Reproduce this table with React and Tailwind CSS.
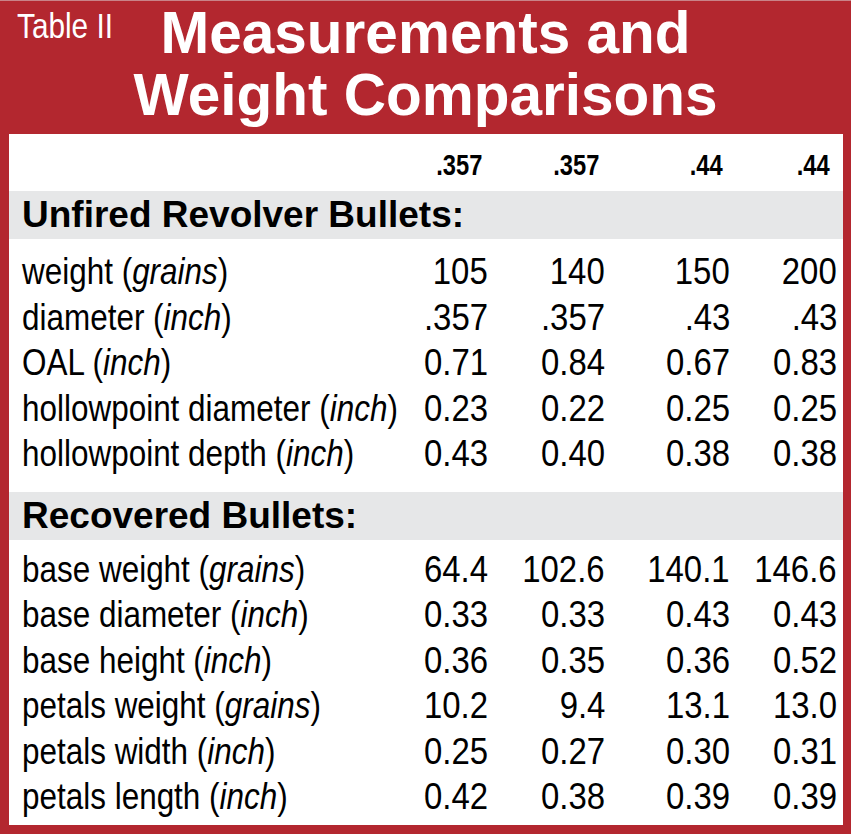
import React from 'react';

// no Arial Narrow installed: squeeze Liberation Sans horizontally instead
const sans = "font-['Liberation_Sans',Arial,sans-serif]";
const squeezeL = 'inline-block origin-left scale-x-[0.85] whitespace-nowrap';
const squeezeR = 'inline-block origin-right scale-x-[0.89] whitespace-nowrap';
const squeezeH = 'inline-block origin-right scale-x-[0.79] whitespace-nowrap';

const unfired = [
  { label: 'weight', unit: 'grains', values: ['105', '140', '150', '200'] },
  { label: 'diameter', unit: 'inch', values: ['.357', '.357', '.43', '.43'] },
  { label: 'OAL', unit: 'inch', values: ['0.71', '0.84', '0.67', '0.83'] },
  { label: 'hollowpoint diameter', unit: 'inch', values: ['0.23', '0.22', '0.25', '0.25'] },
  { label: 'hollowpoint depth', unit: 'inch', values: ['0.43', '0.40', '0.38', '0.38'] },
];

const recovered = [
  { label: 'base weight', unit: 'grains', values: ['64.4', '102.6', '140.1', '146.6'] },
  { label: 'base diameter', unit: 'inch', values: ['0.33', '0.33', '0.43', '0.43'] },
  { label: 'base height', unit: 'inch', values: ['0.36', '0.35', '0.36', '0.52'] },
  { label: 'petals weight', unit: 'grains', values: ['10.2', '9.4', '13.1', '13.0'] },
  { label: 'petals width', unit: 'inch', values: ['0.25', '0.27', '0.30', '0.31'] },
  { label: 'petals length', unit: 'inch', values: ['0.42', '0.38', '0.39', '0.39'] },
];

// right edges of the four value columns: 487 / 604 / 729 / 836
const colWidths = ['w-[89px]', 'w-[117px]', 'w-[125px]', 'w-[107px]'];

const DataRow = ({ row }) => (
  <div className={`flex h-[45.5px] pr-[6px] leading-[45.5px] text-[37px] text-black ${sans}`}>
    <div className="flex-1 min-w-0 pl-[13px]">
      <span className={squeezeL}>
        {row.label} (<span className="italic">{row.unit}</span>)
      </span>
    </div>
    {row.values.map((v, i) => (
      <div key={i} className={`${colWidths[i]} text-right`}>
        <span className={squeezeR}>{v}</span>
      </div>
    ))}
  </div>
);

const Section = ({ title }) => (
  <div className={`h-[48px] leading-[48px] bg-[#e6e7e8] pl-[13px] text-[37px] font-bold text-black ${sans}`}>
    {title}
  </div>
);

const Head = ({ w, pr, children }) => (
  <div className={`${w} ${pr} text-right`}>
    <span className={squeezeH}>{children}</span>
  </div>
);

export default function App() {
  return (
    <div className="w-[851px] h-[834px] bg-[#b3272f] border-t border-[#c98388] flex flex-col">
      <div className="relative h-[133px] pt-[1px] text-white">
        <div className={`absolute left-[17px] top-[7px] text-[35px] leading-[35px] ${sans}`}>
          <span className={squeezeL}>Table II</span>
        </div>
        <h1 className={`text-center text-[58.5px] leading-[62px] font-bold ${sans}`}>
          Measurements and
          <br />
          Weight Comparisons
        </h1>
      </div>

      <div className="flex-1 ml-[9px] mr-[8px] mb-[9px] bg-white flex flex-col">
        <div className={`flex h-[57px] pt-[16px] pr-[6px] text-[30px] leading-[30px] font-bold text-black ${sans}`}>
          <div className="flex-1" />
          <Head w={colWidths[0]} pr="pr-[6px]">.357</Head>
          <Head w={colWidths[1]} pr="pr-[6px]">.357</Head>
          <Head w={colWidths[2]} pr="pr-[7px]">.44</Head>
          <Head w={colWidths[3]} pr="pr-[7px]">.44</Head>
        </div>

        <Section title="Unfired Revolver Bullets:" />
        <div className="pt-[10px] pb-[15px]">
          {unfired.map((r) => (
            <DataRow key={r.label} row={r} />
          ))}
        </div>

        <Section title="Recovered Bullets:" />
        <div className="pt-[7px]">
          {recovered.map((r) => (
            <DataRow key={r.label} row={r} />
          ))}
        </div>
      </div>
    </div>
  );
}
